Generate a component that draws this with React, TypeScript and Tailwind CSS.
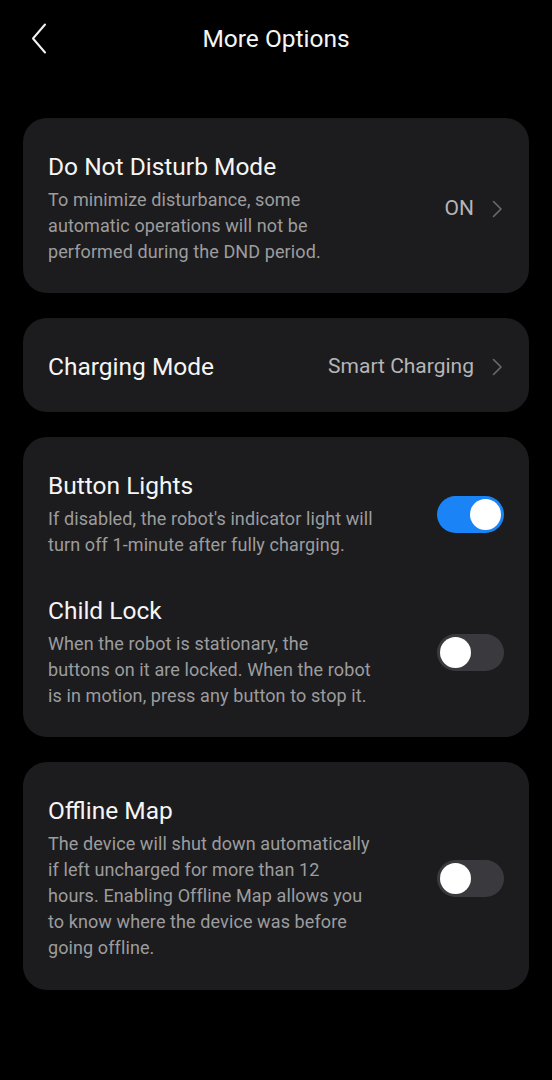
import React from "react";

function Toggle({ on }: { on: boolean }) {
  return (
    <div
      className={`relative w-[67px] h-[37px] rounded-full shrink-0 ${on ? "bg-[#1a84f6]" : "bg-[#3a3a3e]"}`}
    >
      <div
        className={`absolute top-[3px] w-[31px] h-[31px] rounded-full bg-white ${on ? "right-[3px]" : "left-[3px]"}`}
      />
    </div>
  );
}

function Chevron() {
  return (
    <svg width="11" height="18" viewBox="0 0 11 18" fill="none" className="shrink-0">
      <path d="M1.5 1.5 L9 9 L1.5 16.5" stroke="#6a6a6c" strokeWidth="1.6" strokeLinecap="round" strokeLinejoin="round" />
    </svg>
  );
}

const titleCls = "text-[24.5px] leading-[32px] text-[#f5f5f5]";
const descCls = "mt-[4px] text-[18px] leading-[26px] text-[#9c9c9e] whitespace-nowrap tracking-[0.1px]";

export default function App() {
  const font = { fontFamily: "Roboto, 'Noto Sans', sans-serif" };
  return (
    <div className="w-[552px] h-[1080px] bg-black text-white flex flex-col" style={font}>
      {/* Header */}
      <div className="relative h-[78px] flex items-center justify-center">
        <svg
          width="16"
          height="31"
          viewBox="0 0 16 31"
          fill="none"
          className="absolute left-[31px] top-[23px]"
        >
          <path d="M14 1.5 L2 15.5 L14 29.5" stroke="#f2f2f2" strokeWidth="2" strokeLinecap="round" strokeLinejoin="round" />
        </svg>
        <div className="text-[24.5px] leading-[32px] text-[#f5f5f5]">More Options</div>
      </div>

      <div className="px-[23px] pt-[40px] flex flex-col gap-[25px]">
        {/* DND */}
        <div className="bg-[#1c1c1e] rounded-[24px] pl-[25px] pr-[26px] pt-[33px] pb-[28px] flex items-center">
          <div className="flex-1">
            <div className={titleCls}>Do Not Disturb Mode</div>
            <div className={descCls}>
              To minimize disturbance, some
              <br />
              automatic operations will not be
              <br />
              performed during the DND period.
            </div>
          </div>
          <div className="flex items-center gap-[18px] mt-[2px]">
            <span className="text-[21px] text-[#b5b5b7]">ON</span>
            <Chevron />
          </div>
        </div>

        {/* Charging */}
        <div className="bg-[#1c1c1e] rounded-[24px] pl-[25px] pr-[26px] h-[94px] flex items-center">
          <div className="flex-1 flex items-center justify-between pt-[3px]">
            <div className={titleCls}>Charging Mode</div>
            <div className="flex items-center gap-[18px]">
              <span className="text-[21px] text-[#b5b5b7]">Smart Charging</span>
              <Chevron />
            </div>
          </div>
        </div>

        {/* Button lights + child lock */}
        <div className="bg-[#1c1c1e] rounded-[24px] pl-[25px] pr-[25px] pt-[33px] pb-[28px] flex flex-col gap-[37px]">
          <div className="flex items-center">
            <div className="flex-1">
              <div className={titleCls}>Button Lights</div>
              <div className={descCls}>
                If disabled, the robot's indicator light will
                <br />
                turn off 1-minute after fully charging.
              </div>
            </div>
            <Toggle on={true} />
          </div>
          <div className="flex items-center">
            <div className="flex-1">
              <div className={titleCls}>Child Lock</div>
              <div className={descCls}>
                When the robot is stationary, the
                <br />
                buttons on it are locked. When the robot
                <br />
                is in motion, press any button to stop it.
              </div>
            </div>
            <Toggle on={false} />
          </div>
        </div>

        {/* Offline map */}
        <div className="bg-[#1c1c1e] rounded-[24px] pl-[25px] pr-[25px] pt-[33px] pb-[29px] flex items-center">
          <div className="flex-1">
            <div className={titleCls}>Offline Map</div>
            <div className={descCls}>
              The device will shut down automatically
              <br />
              if left uncharged for more than 12
              <br />
              hours. Enabling Offline Map allows you
              <br />
              to know where the device was before
              <br />
              going offline.
            </div>
          </div>
          <Toggle on={false} />
        </div>
      </div>
    </div>
  );
}
